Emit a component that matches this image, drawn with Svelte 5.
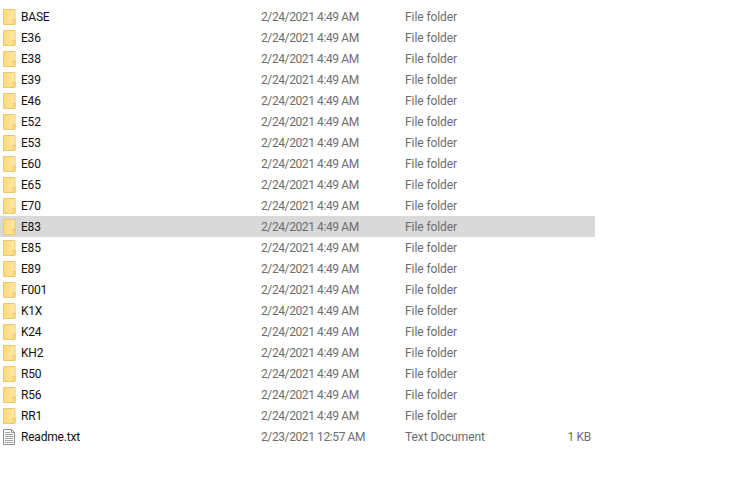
<script>
  const names = ['BASE','E36','E38','E39','E46','E52','E53','E60','E65','E70','E83','E85','E89','F001','K1X','K24','KH2','R50','R56','RR1'];
</script>

<div class="list">
  {#each names as name}
    <div class="row" class:selected={name === 'E83'}>
      <svg class="icon" width="16" height="16" viewBox="0 0 16 16">
        <defs>
          <linearGradient id="fold" x1="0" x2="1" y1="0" y2="0">
            <stop offset="0" stop-color="#fdd978"/>
            <stop offset="1" stop-color="#fee9a6"/>
          </linearGradient>
        </defs>
        <path d="M3.500 0.500h11.500v15H3.500z" fill="url(#fold)" stroke="#ecc86c"/>
        <path d="M12.500 10v5h3v-5z" fill="#eec35c"/>
        <path d="M13 11h1.500v4H13z" fill="#fbe08c"/>
      </svg>
      <span class="name">{name}</span>
      <span class="date">2/24/2021 4:49 AM</span>
      <span class="type">File folder</span>
      <span class="size"></span>
    </div>
  {/each}
  <div class="row">
    <svg class="icon" width="16" height="16" viewBox="0 0 16 16">
      <path d="M3.500 0.500h8l3 3v12h-11z" fill="#fff" stroke="#8e8e8e"/>
      <path d="M11.500 0.500v3h3" fill="none" stroke="#8e8e8e"/>
      <path d="M5 3.500h5M5 5.500h8M5 7.500h8M5 9.500h8M5 11.500h8M5 13.500h8" stroke="#a0a0a0" fill="none"/>
    </svg>
    <span class="name">Readme.txt</span>
    <span class="date">2/23/2021 12:57 AM</span>
    <span class="type">Text Document</span>
    <span class="size">1 KB</span>
  </div>
</div>

<style>
  :global(body) {
    margin: 0;
    background: #fff;
  }
  .list {
    width: 595px;
    padding-top: 6px;
    font-family: Roboto, "Noto Sans", sans-serif;
    font-size: 12px;
  }
  .row {
    display: grid;
    grid-template-columns: 21px 240px 144px 130px 56px;
    align-items: center;
    height: 21px;
    box-sizing: border-box;
  }
  .row.selected {
    background: #d9d9d9;
  }
  .icon {
    display: block;
  }
  .name {
    color: #111;
    letter-spacing: -0.2px;
  }
  .date, .type, .size {
    color: #6d6d6d;
  }
  .date {
    letter-spacing: -0.4px;
  }
  .type {
    letter-spacing: -0.08px;
  }
  .size {
    text-align: right;
    letter-spacing: -0.3px;
  }
</style>
